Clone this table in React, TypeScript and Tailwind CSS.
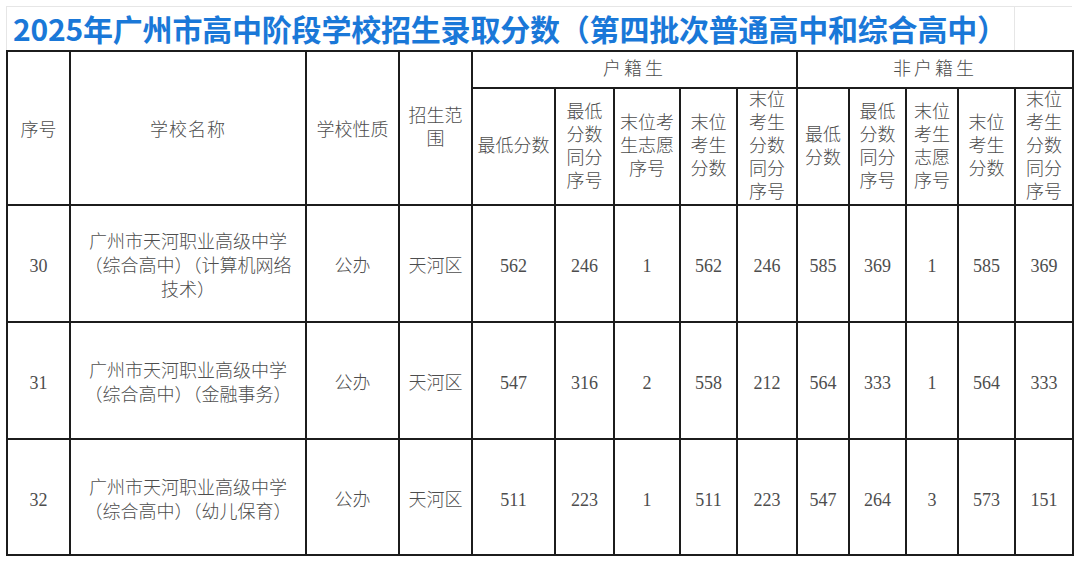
const COLS = [63, 236, 93, 73, 83, 59, 66, 57, 60, 52, 57, 52, 57, 58]

type Row = {
  no: string
  name: string[]
  kind: string
  area: string
  hj: string[]
  fhj: string[]
}

const ROWS: Row[] = [
  {
    no: '30',
    name: ['广州市天河职业高级中学', '（综合高中）（计算机网络', '技术）'],
    kind: '公办',
    area: '天河区',
    hj: ['562', '246', '1', '562', '246'],
    fhj: ['585', '369', '1', '585', '369'],
  },
  {
    no: '31',
    name: ['广州市天河职业高级中学', '（综合高中）（金融事务）'],
    kind: '公办',
    area: '天河区',
    hj: ['547', '316', '2', '558', '212'],
    fhj: ['564', '333', '1', '564', '333'],
  },
  {
    no: '32',
    name: ['广州市天河职业高级中学', '（综合高中）（幼儿保育）'],
    kind: '公办',
    area: '天河区',
    hj: ['511', '223', '1', '511', '223'],
    fhj: ['547', '264', '3', '573', '151'],
  },
]

const HJ_HEAD = [['最低分数'], ['最低', '分数', '同分', '序号'], ['末位考', '生志愿', '序号'], ['末位', '考生', '分数'], ['末位', '考生', '分数', '同分', '序号']]
const FHJ_HEAD = [['最低', '分数'], ['最低', '分数', '同分', '序号'], ['末位', '考生', '志愿', '序号'], ['末位', '考生', '分数'], ['末位', '考生', '分数', '同分', '序号']]

const cell = 'border-2 border-[#1c1c1c] text-center align-middle p-0'
// body cells sit a touch low in the source sheet
const bodyCell = 'border-2 border-[#1c1c1c] text-center align-middle px-0 pb-0 pt-[5px]'

function Lines({ lines }: { lines: string[] }) {
  return (
    <>
      {lines.map((l, i) => (
        <div key={i}>{l}</div>
      ))}
    </>
  )
}

export default function App() {
  return (
    <div className="w-[1080px] h-[563px] bg-white overflow-hidden">
      <div className="pl-[6px] pt-[6px]">
        <div className="flex h-[44px] w-[1066px] border-t border-l border-[#e6e6e6]">
          <div
            className="w-[1008px] flex items-center pl-[6px] border-r border-[#e6e6e6] text-[30px] font-bold text-[#1a78d8] tracking-[-0.2px] whitespace-nowrap"
            style={{ fontFamily: '"Noto Sans CJK SC", "Noto Sans", sans-serif' }}
          >
            2025年广州市高中阶段学校招生录取分数（第四批次普通高中和综合高中）
          </div>
          <div className="flex-1" />
        </div>
        <table
          className="table-fixed border-collapse text-[18px] leading-[24px] text-[#4d4d4d] font-light"
          style={{ width: 1066, fontFamily: '"Liberation Serif", "Noto Sans CJK SC", serif' }}
        >
          <colgroup>
            {COLS.map((w, i) => (
              <col key={i} style={{ width: w }} />
            ))}
          </colgroup>
          <thead className="leading-[23px]">
            <tr className="h-[37px]">
              <th rowSpan={2} className={`${bodyCell} font-light`}>序号</th>
              <th rowSpan={2} className={`${bodyCell} font-light tracking-[1px]`}>学校名称</th>
              <th rowSpan={2} className={`${bodyCell} font-light`}>学校性质</th>
              <th rowSpan={2} className={`${cell} font-light`}>
                <Lines lines={['招生范', '围']} />
              </th>
              <th colSpan={5} className={`${cell} font-light tracking-[3px]`}>户籍生</th>
              <th colSpan={5} className={`${cell} font-light tracking-[3px]`}>非户籍生</th>
            </tr>
            <tr className="h-[117px]">
              {HJ_HEAD.map((h, i) => (
                <th key={`h${i}`} className={`${cell} font-light`}>
                  <Lines lines={h} />
                </th>
              ))}
              {FHJ_HEAD.map((h, i) => (
                <th key={`f${i}`} className={`${cell} font-light`}>
                  <Lines lines={h} />
                </th>
              ))}
            </tr>
          </thead>
          <tbody>
            {ROWS.map((r, ri) => (
              <tr key={r.no} className={ri === 2 ? 'h-[116px]' : 'h-[117px]'}>
                <td className={bodyCell}>{r.no}</td>
                <td className={bodyCell}>
                  <Lines lines={r.name} />
                </td>
                <td className={bodyCell}>{r.kind}</td>
                <td className={bodyCell}>{r.area}</td>
                {r.hj.map((v, i) => (
                  <td key={`h${i}`} className={bodyCell}>{v}</td>
                ))}
                {r.fhj.map((v, i) => (
                  <td key={`f${i}`} className={bodyCell}>{v}</td>
                ))}
              </tr>
            ))}
          </tbody>
        </table>
      </div>
    </div>
  )
}
